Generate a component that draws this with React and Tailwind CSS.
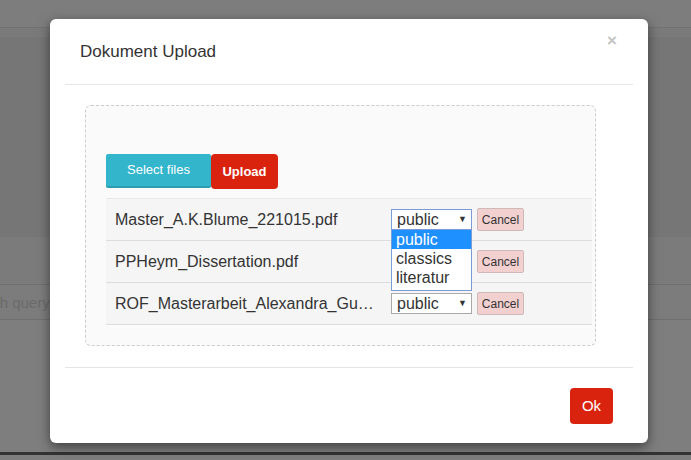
import React from 'react';

const files = [
  { name: 'Master_A.K.Blume_221015.pdf', open: true },
  { name: 'PPHeym_Dissertation.pdf', open: false, covered: true },
  { name: 'ROF_Masterarbeit_Alexandra_Gu…', open: false },
];

const FakeSelect = ({ focused, covered }) => (
  <div
    className={`flex items-center justify-between w-[81px] h-[21px] bg-white pl-[5px] pr-[4px] text-[16px] leading-none text-[#333] border ${focused ? 'border-[#7b9bd6]' : 'border-[#a9a9a9]'}`}
  >
    {/* the open list of the row above lies over this one */}
    <span className={covered ? 'invisible' : ''}>public</span>
    <span className={`text-[9px] text-[#333] ${covered ? 'invisible' : ''}`}>▼</span>
  </div>
);

const FileRow = ({ file }) => (
  <div className="relative flex items-center h-[42px] bg-[#f5f5f5] border-b border-[#dddddd] pl-[9px]">
    <span className="w-[276px] text-[16px] text-[#333] truncate">{file.name}</span>
    <FakeSelect focused={file.open} covered={file.covered} />
    <button className="ml-[5px] w-[47px] h-[23px] rounded-[2px] bg-[#f2d0d0] border border-[#cfb8b8] text-[12px] text-[#333]">
      Cancel
    </button>
    {file.open && (
      <div className="absolute left-[285px] top-[30px] z-10 w-[81px] bg-white border border-[#7b9bd6] text-[16px] leading-[19px] text-[#333]">
        <div className="bg-[#1e90ff] text-white pl-[4px]">public</div>
        <div className="pl-[4px]">classics</div>
        <div className="pl-[4px] pb-[3px]">literatur</div>
      </div>
    )}
  </div>
);

export default function App() {
  return (
    <div className="relative w-[691px] h-[460px] overflow-hidden bg-[#7e7e7e] font-['Liberation_Sans',Arial,sans-serif]">
      {/* dimmed page behind the modal */}
      <div className="h-[28px] bg-[#7d7d7d] border-b border-[#727272]" />
      <div className="h-[9px] bg-[#7a7a7a]" />
      <div className="h-[200px] bg-[#767676]" />
      <div className="h-[48px] bg-[#7b7b7b] border-b border-[#707070]" />
      <div className="h-[35px] bg-[#7c7c7c] border-b border-[#6f6f6f] flex items-center overflow-hidden">
        <span className="-ml-[37px] mt-[3px] text-[15px] text-[#6a6a6a] whitespace-nowrap">search query</span>
      </div>
      <div className="h-[135px] bg-[#7e7e7e] border-b-[3px] border-[#333]" />

      {/* modal */}
      <div className="absolute left-[50px] top-[19px] w-[598px] h-[424px] bg-white rounded-[6px] shadow-[0_4px_12px_rgba(0,0,0,0.5)] flex flex-col">
        <div className="relative mx-[15px] h-[66px] border-b border-[#e5e5e5] pl-[15px] pt-[24px]">
          <h4 className="text-[17px] text-[#333] leading-none">Dokument Upload</h4>
          <span className="absolute right-[16px] top-[13px] text-[17px] font-bold text-[#c4c4c4] leading-none">×</span>
        </div>

        <div className="h-[282px] pt-[20px] pl-[35px] pr-[52px]">
          <div className="h-[241px] border border-dashed border-[#cccccc] rounded-[6px] bg-[#fafafa] pt-[48px] pl-[20px] pr-[3px]">
            <div className="flex items-start">
              <button className="w-[105px] h-[34px] bg-[#33b5cb] border-b-2 border-[#2a9db1] rounded-[2px] text-[13px] text-white">
                Select files
              </button>
              <button className="w-[67px] h-[35px] bg-[#d9230f] rounded-[4px] text-[13px] font-bold text-white">
                Upload
              </button>
            </div>
            <div className="mt-[9px] border-t border-[#e8e8e8]">
              {files.map((f, i) => (
                <FileRow key={i} file={f} />
              ))}
            </div>
          </div>
        </div>

        <div className="mx-[15px] border-t border-[#e5e5e5] flex justify-end pt-[20px] pr-[20px]">
          <button className="w-[43px] h-[36px] bg-[#d9230f] rounded-[4px] text-[15px] text-white">Ok</button>
        </div>
      </div>
    </div>
  );
}
